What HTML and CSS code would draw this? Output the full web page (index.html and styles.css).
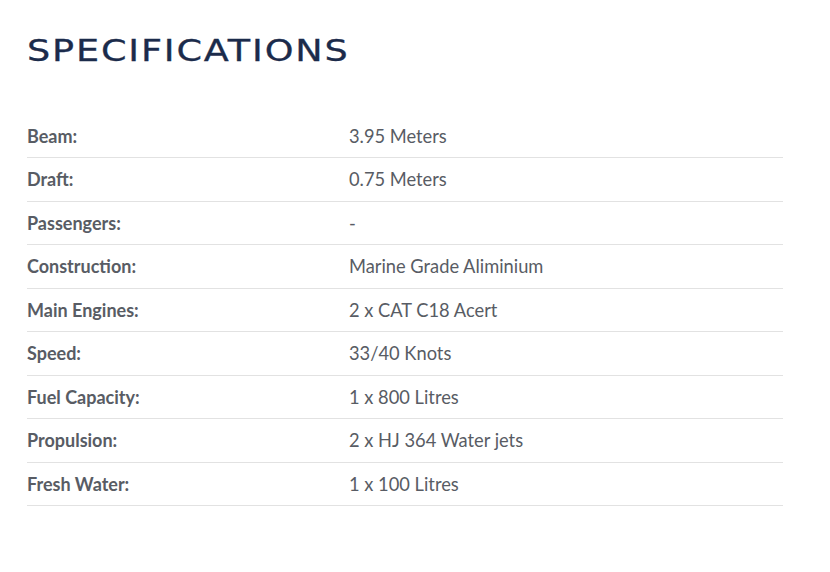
FILE: index.html
```html
<!DOCTYPE html>
<html>
<head>
<meta charset="utf-8">
<link rel="stylesheet" href="styles.css">
</head>
<body>
<div class="page">
  <h2 class="title"><span class="title-text">SPECIFICATIONS</span></h2>
  <div class="specs">
    <div class="row"><div class="label">Beam:</div><div class="value">3.95 Meters</div></div>
    <div class="row"><div class="label">Draft:</div><div class="value">0.75 Meters</div></div>
    <div class="row"><div class="label">Passengers:</div><div class="value">-</div></div>
    <div class="row"><div class="label">Construction:</div><div class="value">Marine Grade Aliminium</div></div>
    <div class="row"><div class="label">Main Engines:</div><div class="value">2 x CAT C18 Acert</div></div>
    <div class="row"><div class="label">Speed:</div><div class="value">33/40 Knots</div></div>
    <div class="row"><div class="label">Fuel Capacity:</div><div class="value">1 x 800 Litres</div></div>
    <div class="row"><div class="label">Propulsion:</div><div class="value">2 x HJ 364 Water jets</div></div>
    <div class="row"><div class="label">Fresh Water:</div><div class="value">1 x 100 Litres</div></div>
  </div>
</div>
</body>
</html>
```
FILE: styles.css
```css
html, body {
  margin: 0;
  padding: 0;
  background: #ffffff;
}
.page {
  padding: 34px 0 0 27px;
  width: 756px;
}
.title {
  margin: 0;
  font-family: "DejaVu Sans", sans-serif;
  font-weight: normal;
  font-size: 30px;
  line-height: 34px;
  color: #1b2b4b;
}
.title-text {
  display: inline-block;
  letter-spacing: 1.5px;
  transform: scaleX(1.22);
  transform-origin: left center;
  -webkit-text-stroke: 0.3px #1b2b4b;
}
.specs {
  margin-top: 46.5px;
  display: flex;
  flex-direction: column;
}
.row {
  display: flex;
  align-items: center;
  height: 42.5px;
  border-bottom: 1px solid #e2e2e2;
  font-family: Lato, sans-serif;
  font-size: 18.3px;
  color: #585c64;
}
.label {
  width: 322px;
  font-size: 18px;
  font-weight: bold;
}
.value {
  font-weight: normal;
}
```
